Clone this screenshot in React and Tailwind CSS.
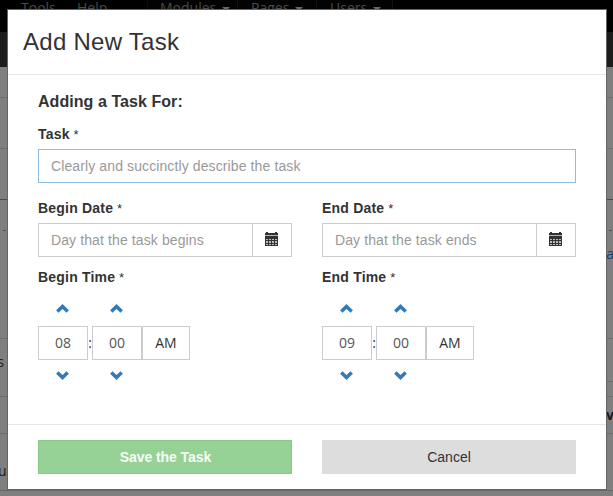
const sans = "font-['Liberation_Sans',Arial,sans-serif]";
const open = "font-['Open_Sans','Noto_Sans',sans-serif]";

function NavItem({ label, caret, className }) {
  return (
    <span className={`flex h-8 shrink-0 whitespace-nowrap ${className}`}>
      <span className="leading-4">{label}</span>
      {caret && <span className="mt-[7px] ml-[6px] h-0 w-0 border-x-4 border-t-4 border-x-transparent border-t-[#666]" />}
    </span>
  );
}

function Row({ height, line, children, className = "" }) {
  return (
    <div className={`flex shrink-0 justify-between overflow-hidden border-b ${height} ${line} ${className}`}>{children}</div>
  );
}

function Backdrop() {
  return (
    <div className={`flex h-[496px] w-[613px] flex-col overflow-hidden bg-[#7f7f7f] ${open}`}>
      <div className="flex h-8 shrink-0 bg-black text-[14px] text-[#4a4a4a]">
        <NavItem label="Tools" className="w-[56px] pl-[21px]" />
        <NavItem label="Help" className="w-[91px] pl-[21px]" />
        <NavItem label="Modules" caret className="w-[90px] border-l border-[#0d0d0d] bg-[#030303] pl-[12px]" />
        <NavItem label="Pages" caret className="w-[79px] border-l border-[#111] bg-[#030303] pl-[13px]" />
        <NavItem label="Users" caret className="w-[77px] border-x border-[#111] bg-[#030303] pl-[13px]" />
      </div>
      <div className="h-[35px] shrink-0 bg-[#1c1c1c]" />
      <Row height="h-[31px]" line="border-[#6f6f6f]" />
      <Row height="h-[51px]" line="border-[#6f6f6f]" />
      <Row height="h-[51px]" line="border-[#3d4a5c]" />
      <Row height="h-[139px]" line="border-[#6d6d6d]">
        <span className="mt-[30px] ml-[3px] h-px w-[3px] bg-[#555]" />
        <span className="flex w-[7px] flex-col">
          <span className="mt-[30px] ml-[3px] h-px w-[3px] bg-[#555]" />
          <span className="mt-[12px] text-[15px] leading-5 text-[#164379]">a</span>
        </span>
      </Row>
      <Row height="h-[58px]" line="border-[#6d6d6d]">
        <span className="-ml-[3px] mt-[12px] text-[15px] leading-5 text-[#222]">s</span>
        <span className="mt-[42px] h-px w-[7px] bg-[#6d6d6d]" />
      </Row>
      <Row height="h-[37px]" line="border-[#6d6d6d]" className="!justify-end">
        <span className="mt-[8px] w-[7px] text-[14px] font-bold leading-5 text-[#1a1a1a]">v</span>
      </Row>
      <Row height="h-[57px]" line="border-[#666]">
        <span className="-ml-[2px] mt-[27px] text-[14px] leading-5 text-[#1a1a1a]">u</span>
      </Row>
    </div>
  );
}

function Label({ children }) {
  return (
    <div className="h-5 whitespace-nowrap text-[14px] leading-5">
      <b className="tracking-[0.2px]">{children}</b> <span className="text-[13px] leading-none">*</span>
    </div>
  );
}

function Calendar() {
  return (
    <svg width="13" height="14" viewBox="0 0 13 14" shapeRendering="crispEdges">
      <path fill="#333" d="M1 0h2v1h7V0h2v1h1v2H0V1h1z" />
      <path fill="#b5b5b5" d="M0 3h13v1H0z" />
      <path fill="#333" d="M0 5h13v9H0zM0 4h13v1H0z" />
      <path fill="#bbb" d="M1 7h2v1H1zM4 7h2v1H4zM7 7h2v1H7zM10 7h2v1h-2zM1 9h2v2H1zM4 9h2v2H4zM7 9h2v2H7zM10 9h2v2h-2zM1 12h2v1H1zM4 12h2v1H4zM7 12h2v1H7zM10 12h2v1h-2z" />
    </svg>
  );
}

function DateField({ label, placeholder }) {
  return (
    <div className="w-[254px]">
      <Label>{label}</Label>
      <div className="mt-[5px] flex h-[34px] border border-[#ccc]">
        <input className="w-[213px] px-3 text-[14px] tracking-[0.11px] outline-none placeholder:text-[#999]" placeholder={placeholder} />
        <button className="flex flex-1 items-start border-l border-[#ccc] pt-2 pl-3"><Calendar /></button>
      </div>
    </div>
  );
}

function Chevron({ down }) {
  return (
    <svg width="14" height="9" viewBox="0 0 14 9" className={down ? "-scale-y-100" : ""}>
      <path fill="#337ab7" d="M6.5 0.1 12.9 6.3 10.5 8.7 6.5 5 2.5 8.7 0.1 6.3z" />
    </svg>
  );
}

function Spinner({ value }) {
  return (
    <div className="flex w-[50px] flex-col items-center">
      <Chevron />
      <div className="mt-[13px] flex h-[34px] w-[50px] items-center justify-center border border-[#ccc] text-[#555]">{value}</div>
      <div className="mt-[11px]"><Chevron down /></div>
    </div>
  );
}

function TimeField({ label, hour, minute }) {
  return (
    <div className="w-[254px]">
      <Label>{label}</Label>
      <div className={`mt-[17px] flex text-[14px] leading-5 ${open}`}>
        <Spinner value={hour} />
        <span className="mt-[29px] w-1 text-center">:</span>
        <Spinner value={minute} />
        <button className="mt-[22px] h-[34px] w-[48px] border border-[#ccc]">AM</button>
      </div>
    </div>
  );
}

export default function App() {
  return (
    <div className="relative h-[496px] w-[613px] overflow-hidden">
      <Backdrop />
      <div className={`absolute top-[10px] left-2 flex h-[479px] w-[598px] flex-col bg-white text-[#333] shadow-[0_0_0_1px_#656565] ${sans}`}>
        <h4 className="h-[65px] shrink-0 border-b border-[#e5e5e5] pt-[15px] pl-[15px] text-[24px] leading-[34px] tracking-[0.27px]">Add New Task</h4>
        <div className="h-[349px] px-[30px] pt-[17px]">
          <h5 className="mb-[12px] text-[16px] leading-5 font-bold tracking-[0.06px]">Adding a Task For:</h5>
          <Label>Task</Label>
          <input className="mt-[5px] block h-[34px] w-full border border-[#8dbde0] px-3 text-[14px] tracking-[0.11px] outline-none placeholder:text-[#999]" placeholder="Clearly and succinctly describe the task" />
          <div className="mt-[15px] flex justify-between">
            <DateField label="Begin Date" placeholder="Day that the task begins" />
            <DateField label="End Date" placeholder="Day that the task ends" />
          </div>
          <div className="mt-[10px] flex justify-between">
            <TimeField label="Begin Time" hour="08" minute="00" />
            <TimeField label="End Time" hour="09" minute="00" />
          </div>
        </div>
        <div className="flex h-[65px] shrink-0 justify-between border-t border-[#e5e5e5] px-[30px] pt-[15px] text-[14px]">
          <button className="h-[34px] w-[254px] border border-[#88c988] bg-[#96d196] pl-px font-bold tracking-[-0.08px] text-[#f7fcf7]">Save the Task</button>
          <button className="h-[34px] w-[254px] bg-[#ddd]">Cancel</button>
        </div>
      </div>
    </div>
  );
}
